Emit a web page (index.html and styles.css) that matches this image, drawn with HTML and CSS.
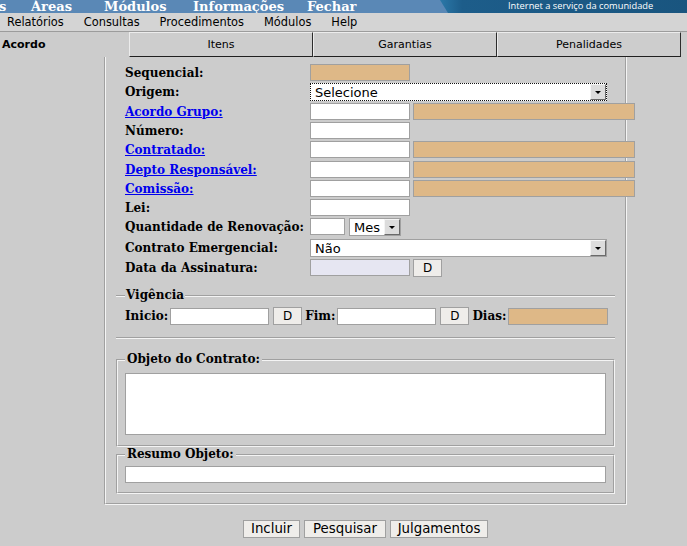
FILE: index.html
```html
<!DOCTYPE html>
<html lang="pt-BR">
<head>
<meta charset="utf-8">
<title>Acordo</title>
<link rel="stylesheet" href="styles.css">
</head>
<body>
<header class="topbar">
  <nav class="mainmenu">
    <span class="mm mm-s">s</span>
    <span class="mm mm-areas">Áreas</span>
    <span class="mm mm-mod">Módulos</span>
    <span class="mm mm-info">Informações</span>
    <span class="mm">Fechar</span>
  </nav>
  <div class="brand">Internet a serviço da comunidade</div>
</header>
<nav class="menubar">
  <span>Relatórios</span>
  <span>Consultas</span>
  <span>Procedimentos</span>
  <span>Módulos</span>
  <span>Help</span>
</nav>
<div class="tabrow">
  <div class="tab-current">Acordo</div>
  <div class="tab">Itens</div>
  <div class="tab">Garantias</div>
  <div class="tab">Penalidades</div>
</div>
<main class="content">
  <section class="panel">
    <div class="form-grid">
      <span class="lbl">Sequencial:</span>
      <div class="fld"><input class="inp w100 tan" type="text"></div>

      <span class="lbl">Origem:</span>
      <div class="fld"><span class="sel sel-focus w297"><select><option>Selecione</option></select><span class="arr"></span></span></div>

      <a class="lbl lnk" href="#">Acordo Grupo:</a>
      <div class="fld"><input class="inp w100" type="text"><input class="inp w222 tan" type="text"></div>

      <span class="lbl">Número:</span>
      <div class="fld"><input class="inp w100" type="text"></div>

      <a class="lbl lnk" href="#">Contratado:</a>
      <div class="fld"><input class="inp w100" type="text"><input class="inp w222 tan" type="text"></div>

      <a class="lbl lnk" href="#">Depto Responsável:</a>
      <div class="fld"><input class="inp w100" type="text"><input class="inp w222 tan" type="text"></div>

      <a class="lbl lnk" href="#">Comissão:</a>
      <div class="fld"><input class="inp w100" type="text"><input class="inp w222 tan" type="text"></div>

      <span class="lbl">Lei:</span>
      <div class="fld"><input class="inp w100" type="text"></div>

      <span class="lbl">Quantidade de Renovação:</span>
      <div class="fld fld-wide"><input class="inp w35" type="text"><span class="sel w52"><select><option>Mes</option></select><span class="arr"></span></span></div>

      <span class="lbl">Contrato Emergencial:</span>
      <div class="fld"><span class="sel w297"><select><option>Não</option></select><span class="arr"></span></span></div>

      <span class="lbl">Data da Assinatura:</span>
      <div class="fld"><input class="inp w100 lav" type="text"><button class="dbtn" type="button">D</button></div>
    </div>

    <fieldset class="vig">
      <legend>Vigência</legend>
      <div class="vrow">
        <span class="vlbl">Inicio:</span>
        <input class="inp w99" type="text">
        <button class="dbtn" type="button">D</button>
        <span class="vlbl">Fim:</span>
        <input class="inp w99" type="text">
        <button class="dbtn" type="button">D</button>
        <span class="vlbl">Dias:</span>
        <input class="inp w100 tan" type="text">
      </div>
    </fieldset>

    <fieldset class="box box-objeto">
      <legend>Objeto do Contrato:</legend>
      <textarea class="txt"></textarea>
    </fieldset>

    <fieldset class="box box-resumo">
      <legend>Resumo Objeto:</legend>
      <input class="inp full" type="text">
    </fieldset>
  </section>
  <div class="actions">
    <button class="btn b-incluir" type="button">Incluir</button>
    <button class="btn b-pesq" type="button">Pesquisar</button>
    <button class="btn b-julg" type="button">Julgamentos</button>
  </div>
</main>
</body>
</html>
```
FILE: styles.css
```css
* { box-sizing: border-box; }

body {
  margin: 0;
  background: #cccccc;
  font-family: "DejaVu Sans", sans-serif;
  color: #000;
}

/* top blue bar */
.topbar {
  display: flex;
  height: 13px;
  background: #5a88b6;
  overflow: hidden;
}
.mainmenu {
  flex: 1;
  display: flex;
  font: bold 13px/13px "DejaVu Serif", serif;
  color: #fff;
  white-space: nowrap;
}
.mm { flex: none; }
.mm-s { width: 32px; margin-left: -1px; }
.mm-areas { width: 73px; }
.mm-mod { width: 89px; }
.mm-info { width: 114px; }
.brand {
  width: 247px;
  background: linear-gradient(90deg, #2b78a8 0, #1d5d8a 22px, #19557f 100%);
  clip-path: polygon(0 0, 100% 0, 100% 100%, 8px 100%);
  color: #fff;
  font: 9.3px/11px "Open Sans", sans-serif;
  padding-left: 68px;
  white-space: nowrap;
}

/* grey menu bar */
.menubar {
  display: flex;
  gap: 20px;
  height: 19px;
  padding-left: 7px;
  background: #d4d4d4;
  border-bottom: 1px solid #9c9c9c;
  font-size: 11.4px;
  line-height: 18px;
}

/* tabs */
.tabrow {
  display: flex;
  height: 25px;
}
.tab-current {
  width: 129px;
  padding-left: 2px;
  font-weight: bold;
  font-size: 11px;
  line-height: 25px;
}
.tab {
  width: 184px;
  border: 1px solid;
  border-color: #ececec #2c2c2c #202020 #ececec;
  background: #cdcdcd;
  text-align: center;
  font-size: 11px;
  line-height: 23px;
}

/* main panel */
.content {
  padding-left: 104px;
}
.panel {
  width: 523px;
  border: 2px groove #f4f4f4;
  border-top: 0;
  padding: 7px 10px 9px;
}

.form-grid {
  margin-left: 9px;
  display: grid;
  grid-template-columns: 185px auto;
  grid-template-rows: 19px 20px 19px 19px 20px 19px 19px 19px 21px 20px 19px;
  align-items: start;
}
.lbl {
  font: bold 12px/17px "DejaVu Serif", serif;
  padding-top: 1px;
  color: #000;
  white-space: nowrap;
}
.lnk {
  color: #0000ee;
  text-decoration: underline;
}
.fld {
  display: flex;
  gap: 3px;
  align-items: flex-start;
}
.fld-wide { gap: 4px; }

.inp {
  height: 17px;
  border: 1px solid #a0a0a0;
  background: #fff;
  padding: 0 3px;
  margin: 0;
  font: 13px "DejaVu Sans", sans-serif;
  border-radius: 0;
}
.tan { background: #deb887; }
.lav { background: #e6e6f2; }
.w100 { width: 100px; }
.w99 { width: 99px; }
.w222 { width: 222px; }
.w35 { width: 35px; }
.w52 { width: 52px; }
.w297 { width: 297px; }
.full { width: 100%; display: block; }

.sel {
  position: relative;
  display: inline-block;
  height: 18px;
}
.sel select {
  appearance: none;
  -webkit-appearance: none;
  display: block;
  width: 100%;
  height: 18px;
  margin: 0;
  border: 1px solid #a0a0a0;
  border-radius: 0;
  background: #fff;
  padding: 0 0 0 4px;
  font: 13px "DejaVu Sans", sans-serif;
  color: #000;
}
.sel-focus select { border: 1px dotted #111; }
.sel .arr {
  position: absolute;
  right: 1px;
  top: 1px;
  width: 16px;
  height: 16px;
  background: #dcdcdc;
  border: 1px solid;
  border-color: #f4f4f4 #6a6a6a #6a6a6a #f4f4f4;
  pointer-events: none;
}
.sel .arr::after {
  content: "";
  position: absolute;
  left: 4px;
  top: 6px;
  border-left: 3px solid transparent;
  border-right: 3px solid transparent;
  border-top: 3px solid #000;
}

.dbtn {
  width: 29px;
  height: 18px;
  padding: 0;
  margin: 0;
  border: 1px solid #a0a0a0;
  border-radius: 0;
  background: #efedea;
  font: 12px "DejaVu Sans", sans-serif;
  color: #000;
}

/* Vigência */
.vig {
  margin: 10px 0 0;
  border: 0;
  border-top: 2px groove #f4f4f4;
  border-bottom: 2px groove #f4f4f4;
  padding: 4px 0 12px 9px;
}
.vig legend,
.box legend {
  font: bold 12px/15px "DejaVu Serif", serif;
  padding: 0 1px;
}
.vrow {
  display: flex;
  align-items: center;
}
.vlbl {
  font: bold 12px/17px "DejaVu Serif", serif;
  margin-right: 2px;
}
.vrow .inp { margin-right: 4px; }
.vrow .dbtn { margin-right: 3px; }

.box {
  margin: 0;
  border: 2px groove #f4f4f4;
  padding: 6px 7px 10px;
}
.box legend { padding: 0 2px; }
.box-objeto { margin-top: 13px; }
.box-resumo { padding-top: 4px; padding-bottom: 9px; }
.txt {
  display: block;
  width: 100%;
  height: 62px;
  margin: 0;
  border: 1px solid #a0a0a0;
  border-radius: 0;
  resize: none;
  background: #fff;
}

/* buttons */
.actions {
  width: 523px;
  display: flex;
  justify-content: center;
  gap: 4px;
  margin-top: 15px;
}
.btn {
  height: 18px;
  padding: 0;
  border: 1px solid #a0a0a0;
  border-radius: 0;
  background: #efedea;
  font: 13.33px/16px "DejaVu Sans", sans-serif;
  color: #000;
}
.b-incluir { width: 57px; }
.b-pesq { width: 82px; }
.b-julg { width: 98px; }
```
